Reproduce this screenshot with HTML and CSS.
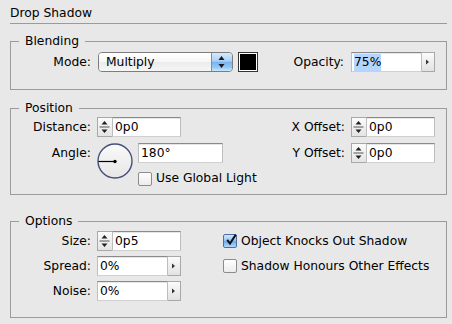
FILE: index.html
```html
<!DOCTYPE html>
<html lang="en">
<head>
    <meta charset="UTF-8">
    <title>Drop Shadow</title>
    <link rel="stylesheet" href="styles.css">
</head>
<body>

<div class="panel">
    <div class="title">Drop Shadow</div>

    <!-- Blending -->
    <fieldset class="group">
        <legend>Blending</legend>
        <div class="blending">
            <span class="lbl">Mode:</span>
            <div class="popup">
                <span class="popup-value">Multiply</span>
                <span class="popup-btn">
                    <svg width="20" height="18" viewBox="0 0 20 18"><path d="M6.5 7 L9.5 3 L12.5 7 Z M6.5 11 L12.5 11 L9.5 15 Z" fill="#1a1a1a"/></svg>
                </span>
            </div>
            <span class="swatch"></span>
            <span class="lbl lbl-push">Opacity:</span>
            <div class="arrowfield field-gap">
                <span class="field field-wide"><span class="sel">75%</span></span>
                <span class="arrow-btn">
                    <svg width="11" height="18" viewBox="0 0 11 18"><path d="M4 6.5 L4 11.5 L7 9 Z" fill="#333"/></svg>
                </span>
            </div>
        </div>
    </fieldset>

    <!-- Position -->
    <fieldset class="group group-position">
        <legend>Position</legend>
        <div class="position">
            <span class="lbl">Distance:</span>
            <div class="spinfield">
                <span class="spinner">
                    <svg width="13" height="18" viewBox="0 0 13 18"><path d="M3.5 6.5 L6.5 3 L9.5 6.5 Z M3.5 11.5 L9.5 11.5 L6.5 15 Z" fill="#222"/><path d="M1.5 9 H11.5" stroke="#555" stroke-width="1"/></svg>
                </span>
                <span class="field">0p0</span>
            </div>
            <span class="lbl lbl-right">X Offset:</span>
            <div class="spinfield">
                <span class="spinner">
                    <svg width="13" height="18" viewBox="0 0 13 18"><path d="M3.5 6.5 L6.5 3 L9.5 6.5 Z M3.5 11.5 L9.5 11.5 L6.5 15 Z" fill="#222"/><path d="M1.5 9 H11.5" stroke="#555" stroke-width="1"/></svg>
                </span>
                <span class="field">0p0</span>
            </div>

            <span class="lbl">Angle:</span>
            <div class="angle">
                <svg class="dial" width="36" height="36" viewBox="0 0 36 36">
                    <defs>
                        <linearGradient id="dialFill" x1="0" y1="0" x2="0" y2="1">
                            <stop offset="0" stop-color="#fafafa"/>
                            <stop offset="1" stop-color="#e6e6e6"/>
                        </linearGradient>
                    </defs>
                    <circle cx="18" cy="18" r="17" fill="url(#dialFill)" stroke="#44507a" stroke-width="1.4"/>
                    <path d="M1.5 18.5 H18" stroke="#000" stroke-width="1.2"/>
                    <circle cx="18" cy="18.5" r="1.7" fill="#000"/>
                </svg>
                <div class="angle-side">
                    <span class="field field-angle">180°</span>
                    <label class="check check-global">
                        <span class="box"></span>
                        Use Global Light
                    </label>
                </div>
            </div>
            <span class="lbl lbl-right">Y Offset:</span>
            <div class="spinfield">
                <span class="spinner">
                    <svg width="13" height="18" viewBox="0 0 13 18"><path d="M3.5 6.5 L6.5 3 L9.5 6.5 Z M3.5 11.5 L9.5 11.5 L6.5 15 Z" fill="#222"/><path d="M1.5 9 H11.5" stroke="#555" stroke-width="1"/></svg>
                </span>
                <span class="field">0p0</span>
            </div>
        </div>
    </fieldset>

    <!-- Options -->
    <fieldset class="group group-options">
        <legend>Options</legend>
        <div class="options">
            <span class="lbl">Size:</span>
            <div class="spinfield">
                <span class="spinner">
                    <svg width="13" height="18" viewBox="0 0 13 18"><path d="M3.5 6.5 L6.5 3 L9.5 6.5 Z M3.5 11.5 L9.5 11.5 L6.5 15 Z" fill="#222"/><path d="M1.5 9 H11.5" stroke="#555" stroke-width="1"/></svg>
                </span>
                <span class="field">0p5</span>
            </div>
            <label class="check">
                <span class="box box-on">
                    <svg width="14" height="14" viewBox="0 0 14 14"><path d="M3.2 6.8 L6 10.6 L11.8 1.6" fill="none" stroke="#111" stroke-width="2"/></svg>
                </span>
                Object Knocks Out Shadow
            </label>

            <span class="lbl">Spread:</span>
            <div class="arrowfield">
                <span class="field field-wide">0%</span>
                <span class="arrow-btn">
                    <svg width="11" height="18" viewBox="0 0 11 18"><path d="M4 6.5 L4 11.5 L7 9 Z" fill="#333"/></svg>
                </span>
            </div>
            <label class="check">
                <span class="box"></span>
                Shadow Honours Other Effects
            </label>

            <span class="lbl">Noise:</span>
            <div class="arrowfield">
                <span class="field field-wide">0%</span>
                <span class="arrow-btn">
                    <svg width="11" height="18" viewBox="0 0 11 18"><path d="M4 6.5 L4 11.5 L7 9 Z" fill="#333"/></svg>
                </span>
            </div>
        </div>
    </fieldset>
</div>

</body>
</html>
```

FILE: styles.css
```css
body {
    margin: 0;
    background-color: #e8e8e8;
    font-family: "DejaVu Sans", "Noto Sans", sans-serif;
    font-size: 12.3px;
    color: #000;
}
.panel {
    padding: 0 5px 0 10px;
}
.title {
    padding: 6px 0 2px;
    line-height: 15px;
    border-bottom: 1px solid #9b9b9b;
}

/* Group boxes */
.group {
    margin: 10px 0 0;
    padding: 0;
    min-width: 0;
    border: 1px solid #9b9b9b;
}
.group legend {
    margin-left: 8px;
    padding: 0 6px;
    line-height: 15px;
}
.group-position {
    margin-top: 11px;
}
.group-options {
    margin-top: 19px;
}

.blending {
    display: flex;
    align-items: center;
    padding: 3px 11px 17px 0;
}
.position {
    display: grid;
    grid-template-columns: 80px 1fr 70px 84px;
    column-gap: 6px;
    row-gap: 6px;
    align-items: start;
    padding: 1px 11px 8px 0;
}
.options {
    display: grid;
    grid-template-columns: 80px 120px 1fr;
    column-gap: 6px;
    row-gap: 5px;
    align-items: start;
    padding: 2px 11px 16px 0;
}

.lbl {
    width: 80px;
    flex: none;
    text-align: right;
    line-height: 20px;
    white-space: nowrap;
}
.position .lbl-right {
    width: auto;
}
.lbl-push {
    margin-left: auto;
}

/* Text fields */
.field {
    display: block;
    box-sizing: border-box;
    width: 69px;
    height: 20px;
    padding-left: 2px;
    line-height: 18px;
    background-color: #fff;
    border: 1px solid #bdbdbd;
    border-top-color: #8a8a8a;
    border-bottom-color: #d0d0d0;
    box-shadow: inset 0 1px 0 #e6e6e6;
    white-space: nowrap;
}
.field-wide {
    width: 71px;
}
.field-angle {
    width: 85px;
}
.sel {
    display: inline-block;
    line-height: 17px;
    background-color: #b5d5ff;
}

.spinfield,
.arrowfield {
    display: flex;
    height: 20px;
}
.field-gap {
    margin-left: 7px;
}
.spinner {
    box-sizing: border-box;
    width: 15px;
    height: 20px;
    border: 1px solid #a8a8a8;
    border-right: none;
    background: linear-gradient(#fbfbfb, #e4e4e4);
}
.spinner svg,
.arrow-btn svg,
.popup-btn svg {
    display: block;
}
.arrow-btn {
    box-sizing: border-box;
    width: 13px;
    height: 20px;
    border: 1px solid #a8a8a8;
    border-left: none;
    background: linear-gradient(#fbfbfb, #e2e2e2);
}

/* Popup button */
.popup {
    display: flex;
    box-sizing: border-box;
    width: 135px;
    height: 20px;
    margin-left: 7px;
    border: 1px solid #7d7d7d;
    border-radius: 4px;
    overflow: hidden;
}
.popup-value {
    flex: 1;
    padding-left: 7px;
    line-height: 18px;
    background: linear-gradient(#ffffff, #f7f7f7 50%, #ececec 52%, #f6f6f6);
}
.popup-btn {
    width: 20px;
    border-left: 1px solid #6f92c4;
    background: linear-gradient(#d6eafd, #a9d0f7 45%, #78b5f0 52%, #93c8f6 80%, #cde7fd);
}

.swatch {
    box-sizing: border-box;
    width: 20px;
    height: 20px;
    margin-left: 5px;
    border: 1px solid #333;
    background-color: #000;
    box-shadow: inset 0 0 0 1px #fff;
}

/* Checkboxes */
.check {
    display: flex;
    align-items: center;
    gap: 4px;
    line-height: 20px;
    white-space: nowrap;
}
.box {
    box-sizing: border-box;
    width: 14px;
    height: 14px;
    border: 1px solid #8c8c8c;
    border-radius: 2px;
    background: linear-gradient(#ffffff, #ececec);
}
.box-on {
    border-color: #4d6ea3;
    background: linear-gradient(#d2e7fc, #8dc0f3 50%, #6aaaf0 55%, #b4dafc);
}
.box-on svg {
    display: block;
    margin: -2px 0 0 0;
}

/* Angle dial */
.angle {
    display: flex;
}
.dial {
    display: block;
    flex: none;
}
.angle-side {
    margin-left: 5px;
}
.angle-side .check-global {
    margin-top: 8px;
    line-height: 15px;
}
```
